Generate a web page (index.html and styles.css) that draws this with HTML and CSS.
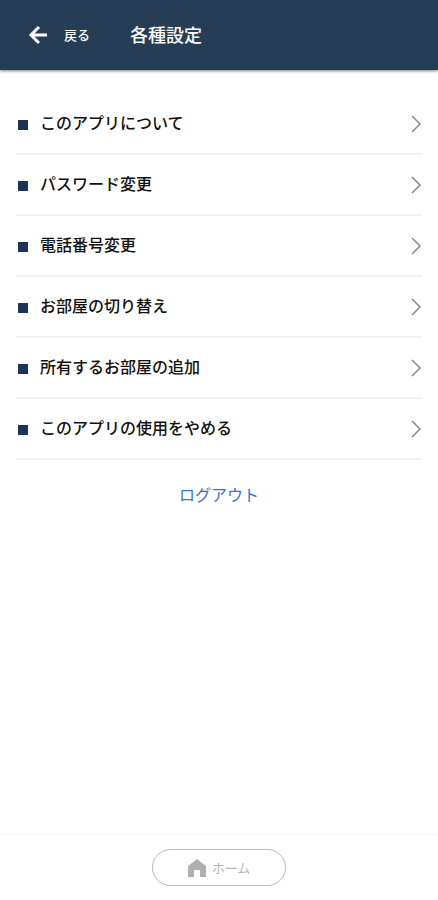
FILE: index.html
```html
<!DOCTYPE html>
<html lang="ja">
<head>
  <meta charset="UTF-8">
  <meta name="viewport" content="width=device-width, initial-scale=1.0">
  <title>各種設定</title>
  <link rel="stylesheet" href="styles.css">
</head>
<body>
  <header class="header">
    <a href="#" class="back">
      <svg class="back-icon" viewBox="0 0 20 20" aria-hidden="true">
        <path d="M19 10H3M11 2L3 10l8 8"/>
      </svg>
      <span>戻る</span>
    </a>
    <h1>各種設定</h1>
  </header>

  <main class="content">
    <ul class="menu">
      <li>
        <a href="#" class="menu-link">
          <span class="menu-label">このアプリについて</span>
          <svg class="chevron" viewBox="0 0 12 18" aria-hidden="true"><path d="M2 1l8 8-8 8"/></svg>
        </a>
      </li>
      <li>
        <a href="#" class="menu-link">
          <span class="menu-label">パスワード変更</span>
          <svg class="chevron" viewBox="0 0 12 18" aria-hidden="true"><path d="M2 1l8 8-8 8"/></svg>
        </a>
      </li>
      <li>
        <a href="#" class="menu-link">
          <span class="menu-label">電話番号変更</span>
          <svg class="chevron" viewBox="0 0 12 18" aria-hidden="true"><path d="M2 1l8 8-8 8"/></svg>
        </a>
      </li>
      <li>
        <a href="#" class="menu-link">
          <span class="menu-label">お部屋の切り替え</span>
          <svg class="chevron" viewBox="0 0 12 18" aria-hidden="true"><path d="M2 1l8 8-8 8"/></svg>
        </a>
      </li>
      <li>
        <a href="#" class="menu-link">
          <span class="menu-label">所有するお部屋の追加</span>
          <svg class="chevron" viewBox="0 0 12 18" aria-hidden="true"><path d="M2 1l8 8-8 8"/></svg>
        </a>
      </li>
      <li>
        <a href="#" class="menu-link">
          <span class="menu-label">このアプリの使用をやめる</span>
          <svg class="chevron" viewBox="0 0 12 18" aria-hidden="true"><path d="M2 1l8 8-8 8"/></svg>
        </a>
      </li>
    </ul>
    <a href="#" class="logout">ログアウト</a>
  </main>

  <footer class="footer">
    <button type="button" class="home-button">
      <svg class="home-icon" viewBox="0 0 18 18" aria-hidden="true">
        <path d="M9 0L0 7v11h6v-6q0-1 1-1h4q1 0 1 1v6h6V7z"/>
      </svg>
      <span>ホーム</span>
    </button>
  </footer>
</body>
</html>
```

FILE: styles.css
```css
* {
  box-sizing: border-box;
}
body {
  font-family: "Noto Sans CJK JP", sans-serif;
  margin: 0;
  background-color: #fff;
  color: #111;
  min-height: 100vh;
  display: flex;
  flex-direction: column;
}
a {
  color: inherit;
  text-decoration: none;
}
.header {
  display: flex;
  align-items: center;
  gap: 40px;
  height: 70px;
  padding: 0 28px;
  background-color: #263d56;
  color: #fff;
  box-shadow: 0 1px 3px rgba(0, 0, 0, 0.5);
}
.back {
  display: flex;
  align-items: center;
  gap: 16px;
  font-size: 13px;
  font-weight: 500;
}
.back span,
h1 {
  padding-bottom: 2px;
}
.back-icon {
  width: 20px;
  height: 20px;
  fill: none;
  stroke: #fff;
  stroke-width: 3;
}
h1 {
  margin: 0;
  font-size: 18px;
  font-weight: 500;
}
.content {
  flex: 1;
  padding: 24px 16px;
}
.menu {
  list-style: none;
  margin: 0;
  padding: 0;
}
.menu-link {
  display: flex;
  align-items: center;
  height: 61px;
  padding: 0 0 0 2px;
  border-bottom: 2px solid #f2f2f2;
  font-size: 16px;
  font-weight: 500;
}
.menu-link::before {
  content: "";
  width: 10px;
  height: 10px;
  margin: 2px 12px 0 0;
  background-color: #1c3557;
}
.menu-label {
  flex: 1;
  padding-bottom: 3px;
}
.chevron {
  width: 12px;
  height: 18px;
  fill: none;
  stroke: #888;
  stroke-width: 1.5;
}
.logout {
  display: block;
  width: fit-content;
  margin: 22px auto 0;
  font-size: 16px;
  line-height: 24px;
  color: #3a72d0;
}
.footer {
  display: flex;
  justify-content: center;
  padding: 14px 16px;
  border-top: 1px solid #f8f8f8;
}
.home-button {
  display: flex;
  align-items: center;
  justify-content: center;
  gap: 6px;
  width: 134px;
  height: 37px;
  padding: 0;
  border: 1px solid #b8b8b8;
  border-radius: 20px;
  background-color: #fff;
  font-family: inherit;
  font-size: 13px;
  color: #b4b4b4;
}
.home-icon {
  width: 18px;
  height: 18px;
  fill: #b0b0b0;
}
```
